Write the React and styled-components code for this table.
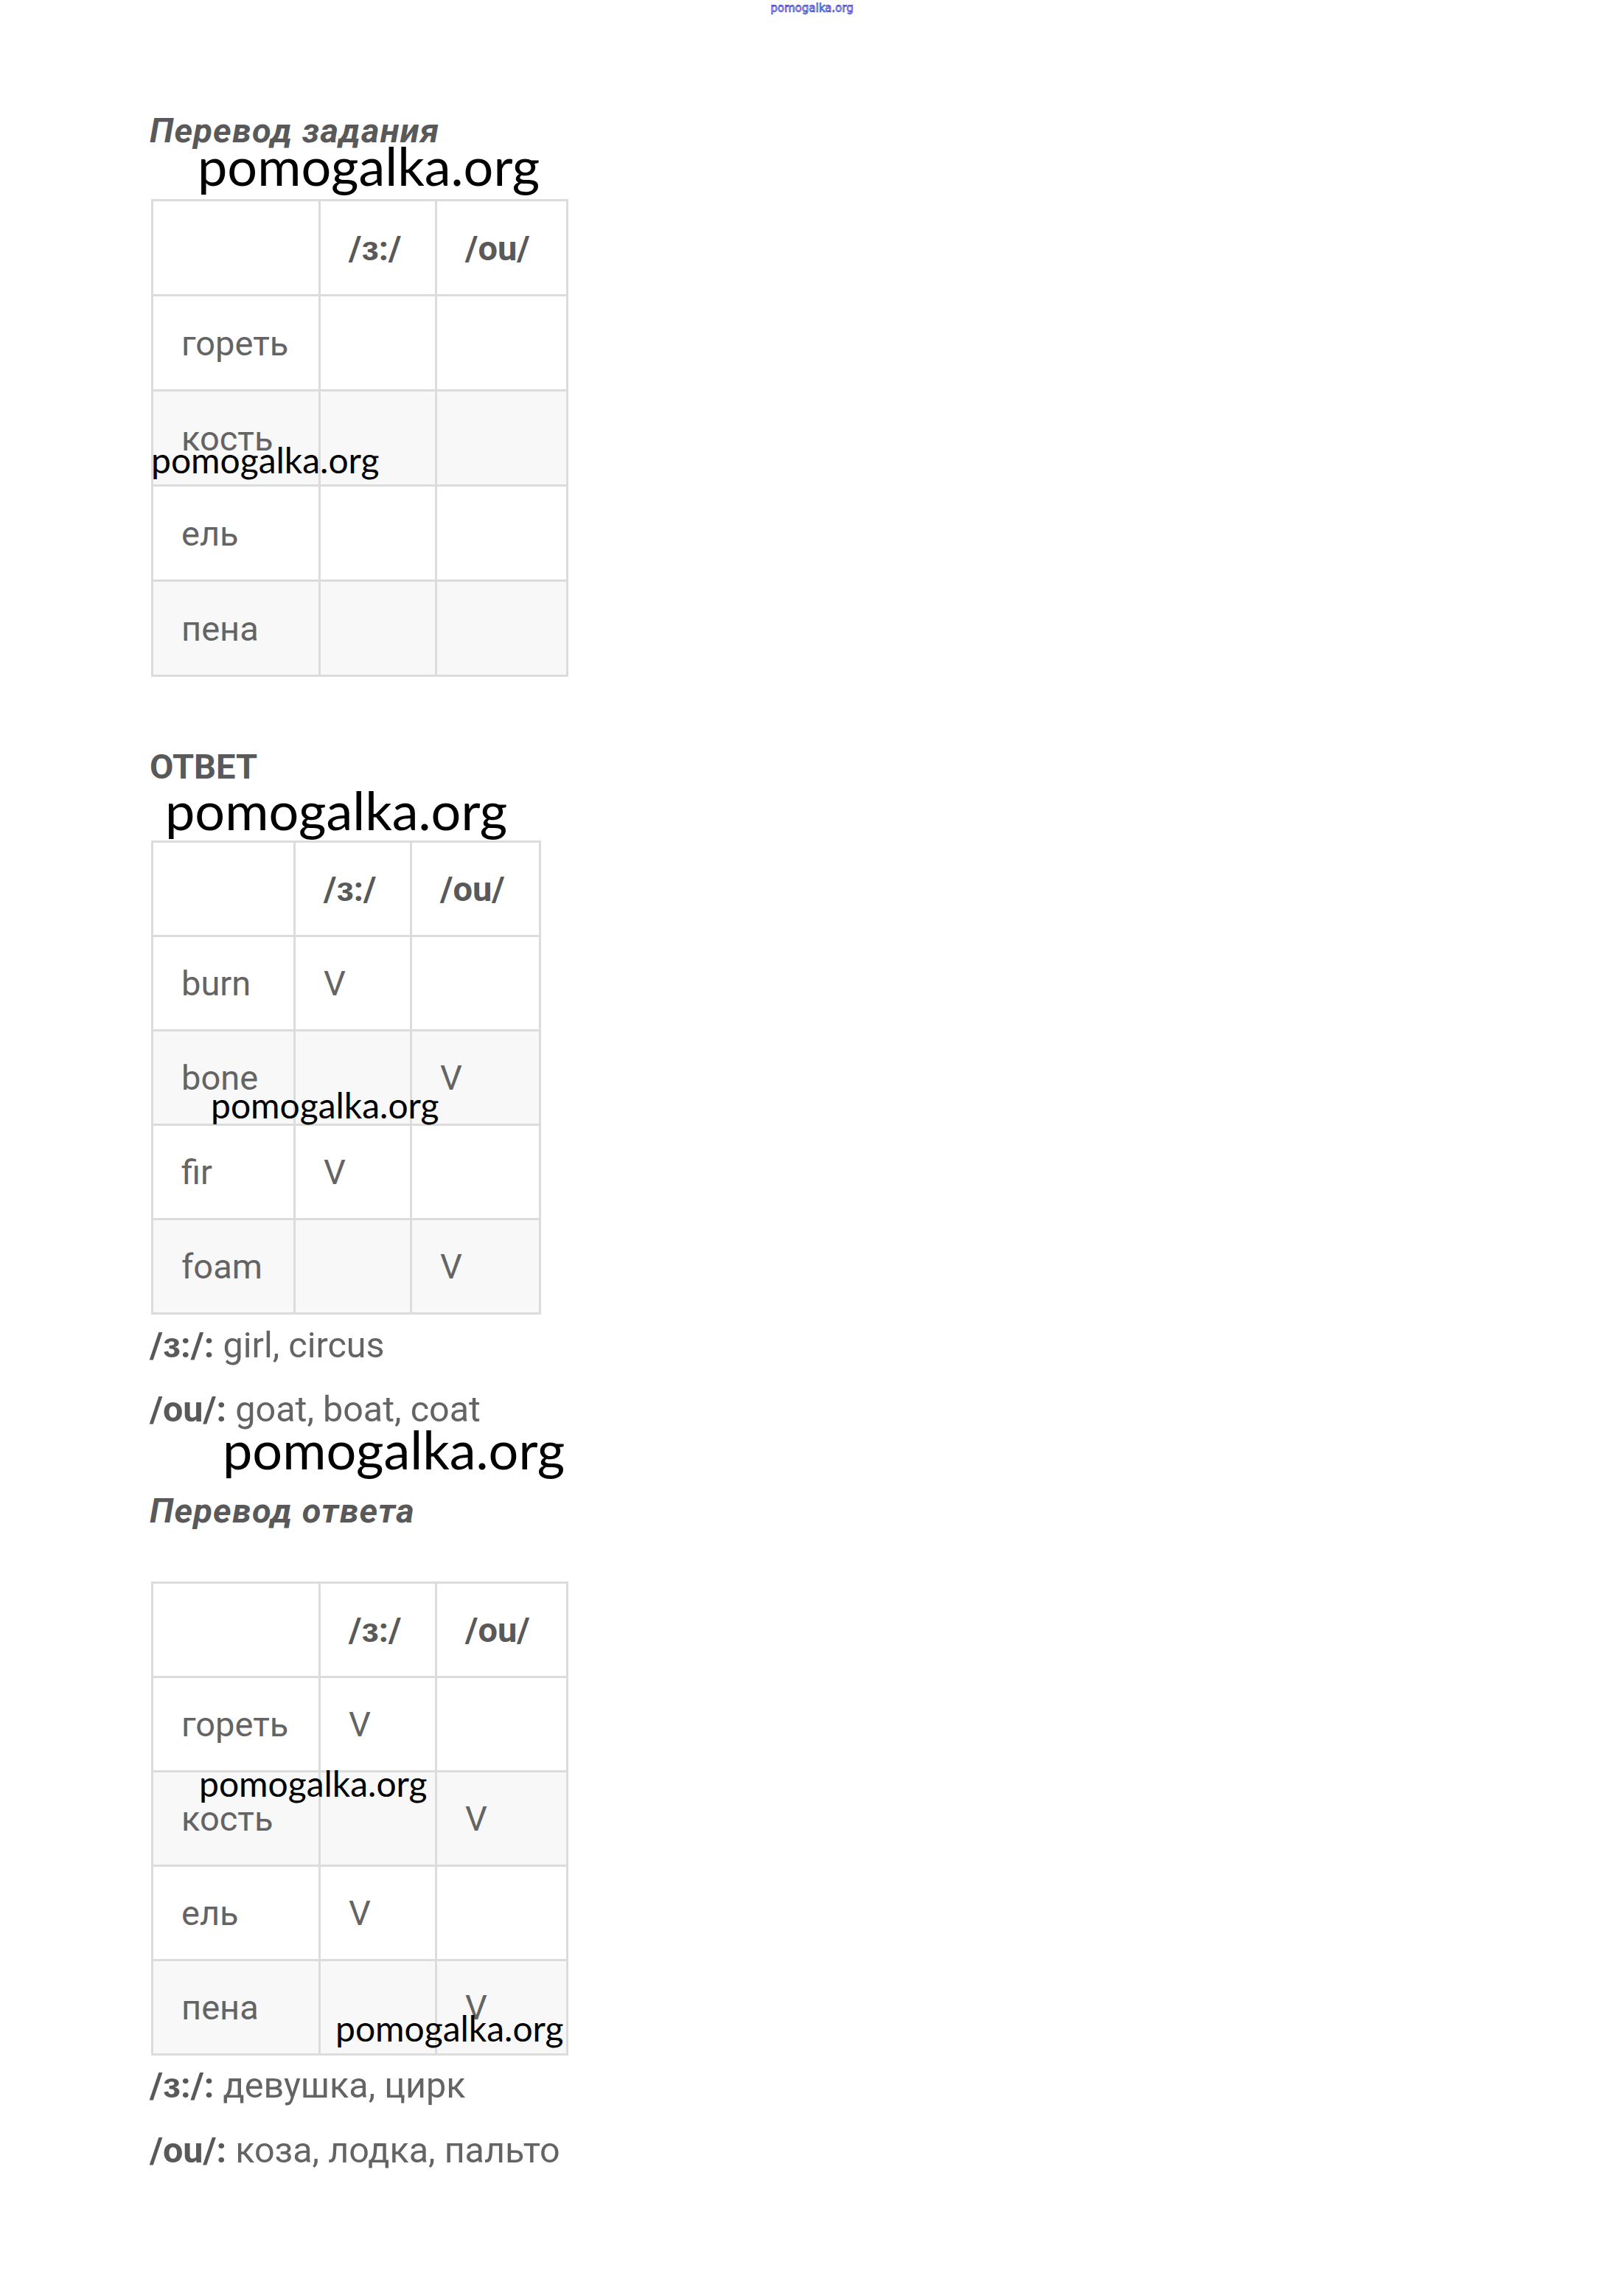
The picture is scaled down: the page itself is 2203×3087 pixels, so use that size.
import React from "react";
import styled, { createGlobalStyle } from "styled-components";

const GlobalStyle = createGlobalStyle`
  html, body {
    margin: 0;
    padding: 0;
    background: #fff;
  }
  body {
    font-family: Roboto, "Liberation Sans", sans-serif;
  }
`;

const Page = styled.div`
  position: relative;
  width: 2203px;
  min-height: 3087px;
  box-sizing: border-box;
  padding: 149px 0 0 203px;
`;

const SiteMark = styled.div`
  position: absolute;
  top: 1px;
  left: 0;
  right: 0;
  text-align: center;
  font-family: "DejaVu Sans", sans-serif;
  font-size: 15px;
  line-height: 20px;
  color: #fff;
  -webkit-text-stroke: 0.8px #3434cc;
`;

const Stamp = styled.div`
  position: absolute;
  font-family: Lato, "Noto Sans", sans-serif;
  font-size: ${(p) => (p.$big ? 72 : 48)}px;
  line-height: 1;
  color: #000;
  white-space: nowrap;
`;

const Heading = styled.div`
  font-size: 47px;
  line-height: 56px;
  font-weight: 700;
  font-style: ${(p) => (p.$italic ? "italic" : "normal")};
  letter-spacing: ${(p) => (p.$italic ? "1.2px" : "0")};
  color: #595959;
  margin-top: ${(p) => p.$top || 0}px;
`;

const Line = styled.div`
  font-size: 48.5px;
  line-height: 56px;
  color: #646464;
  margin-top: ${(p) => p.$top || 0}px;

  b {
    color: #595959;
  }
`;

const Grid = styled.div`
  display: inline-grid;
  grid-template-columns: ${(p) => p.$cols.map((c) => `${c}px`).join(" ")};
  grid-auto-rows: ${(p) => p.$row}px;
  gap: 3px;
  padding: 3px;
  background: #dcdcdc;
  margin-top: ${(p) => p.$top}px;
  margin-left: 2px;
  vertical-align: top;
`;

const Cell = styled.div`
  display: flex;
  align-items: center;
  padding-left: 38px;
  background: ${(p) => (p.$shade ? "#f8f8f8" : "#fff")};
  font-size: 47px;
  font-weight: ${(p) => (p.$head ? 700 : 400)};
  color: ${(p) => (p.$head ? "#595959" : "#646464")};
`;

const Block = styled.div`
  display: block;
`;

const SoundTable = ({ rows, cols, row, top }) => (
  <Block>
    <Grid $cols={cols} $row={row} $top={top}>
      <Cell />
      <Cell $head>/ɜ:/</Cell>
      <Cell $head>/ou/</Cell>
      {rows.map(([word, a, b], i) => (
        <React.Fragment key={word}>
          <Cell $shade={i % 2 === 1}>{word}</Cell>
          <Cell $shade={i % 2 === 1}>{a ? "V" : ""}</Cell>
          <Cell $shade={i % 2 === 1}>{b ? "V" : ""}</Cell>
        </React.Fragment>
      ))}
    </Grid>
  </Block>
);

const task = [
  ["гореть", false, false],
  ["кость", false, false],
  ["ель", false, false],
  ["пена", false, false],
];

const answer = [
  ["burn", true, false],
  ["bone", false, true],
  ["fir", true, false],
  ["foam", false, true],
];

const translated = [
  ["гореть", true, false],
  ["кость", false, true],
  ["ель", true, false],
  ["пена", false, true],
];

const stamps = [
  { big: true, top: 188, left: 268 },
  { big: false, top: 600, left: 205 },
  { big: true, top: 1062, left: 224 },
  { big: false, top: 1475, left: 286 },
  { big: true, top: 1929, left: 302 },
  { big: false, top: 2395, left: 270 },
  { big: false, top: 2727, left: 455 },
];

export default function App() {
  return (
    <Page>
      <GlobalStyle />
      <SiteMark>pomogalka.org</SiteMark>

      <Heading $italic>Перевод задания</Heading>
      <SoundTable rows={task} cols={[224, 155, 175]} row={126} top={65} />

      <Heading $top={94}>ОТВЕТ</Heading>
      <SoundTable rows={answer} cols={[190, 155, 172]} row={125} top={72} />

      <Line $top={14}>
        <b>/ɜ:/:</b> girl, circus
      </Line>
      <Line $top={31}>
        <b>/ou/:</b> goat, boat, coat
      </Line>

      <Heading $italic $top={81}>
        Перевод ответа
      </Heading>
      <SoundTable rows={translated} cols={[224, 155, 175]} row={125} top={68} />

      <Line $top={13}>
        <b>/ɜ:/:</b> девушка, цирк
      </Line>
      <Line $top={32}>
        <b>/ou/:</b> коза, лодка, пальто
      </Line>

      {stamps.map((s, i) => (
        <Stamp key={i} $big={s.big} style={{ top: s.top, left: s.left }}>
          pomogalka.org
        </Stamp>
      ))}
    </Page>
  );
}
